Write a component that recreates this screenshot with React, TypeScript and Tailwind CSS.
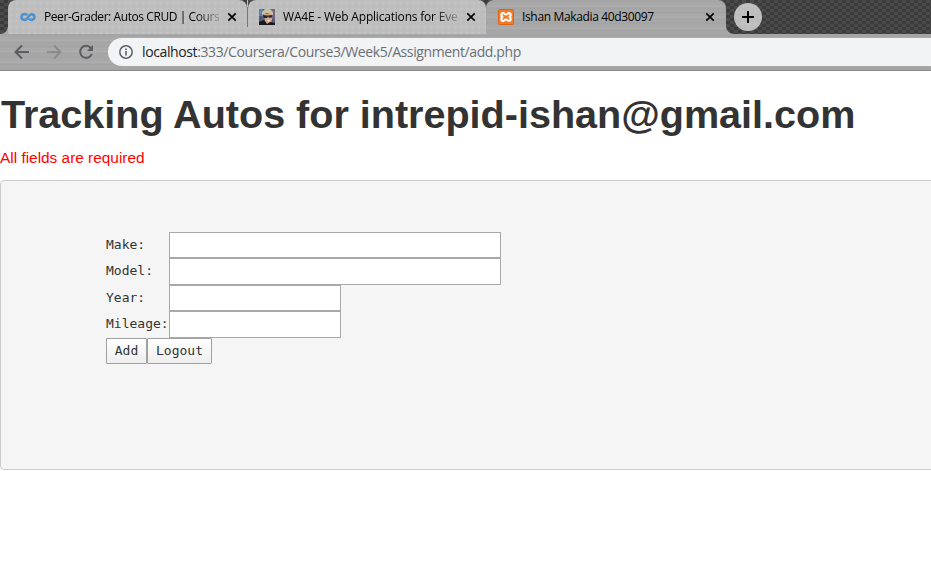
import React from "react";

const METAL =
  "bg-[#a6a6a6] bg-[repeating-linear-gradient(180deg,#a3a3a3_0px,#a9a9a9_1px,#9f9f9f_2px,#acacac_3px,#a5a5a5_5px,#b0b0b0_6px,#a4a4a4_8px,#a8a8a8_11px)]";
const DOTS =
  "bg-[#bebebe] bg-[radial-gradient(circle,#c5c5c5_0.6px,transparent_1px),radial-gradient(circle,#b9b9b9_0.6px,transparent_1px)] bg-[size:6px_6px] bg-[position:0_0,3px_3px]";
const CARBON =
  "bg-[#444] bg-[repeating-conic-gradient(#3b3b3b_0deg_90deg,#4b4b4b_90deg_180deg)] bg-[size:8px_6px]";

const Close = () => (
  <svg width="10" height="10" viewBox="0 0 10 10" className="shrink-0">
    <path d="M1.3 1.3l7.4 7.4M8.7 1.3l-7.4 7.4" stroke="#000" strokeWidth="1.7" />
  </svg>
);

const CourseraIcon = () => (
  <svg width="16" height="16" viewBox="0 0 16 16" className="shrink-0">
    <path d="M7.2 6.2C5.2 3.8 1.5 5 1.5 8s4 4.1 5.9 1.3l1.8-2.7c1.6-2.3 5.3-1.3 5.3 1.4s-3.7 3.9-5.5 1.7" fill="none" stroke="#4a90d2" strokeWidth="2.5" />
  </svg>
);

const PortraitIcon = () => (
  <svg width="16" height="16" viewBox="0 0 16 16" className="shrink-0">
    <path d="M0 0h16v16H0z" fill="#525d75" />
    <path d="M0 0h4v7H0z" fill="#5a84b8" />
    <path d="M12 0h4v10h-4z" fill="#746480" />
    <path d="M5 5h8v6l-2 4H8l-2-3z" fill="#d6a58d" />
    <path d="M3 6V3l3-3h5l3 3v3L8 4z" fill="#c9c0a0" />
    <path d="M4 6l5 .5L13 6v2.5l-3 .3L9 7.5 8 9H5z" fill="#292831" />
    <path d="M0 16v-3l5-2 3 4 3-2 5 1v2z" fill="#17191d" />
    <path d="M8 11h3l-1 2z" fill="#eee2d4" />
  </svg>
);

const XamppIcon = () => (
  <svg width="16" height="16" viewBox="0 0 16 16" className="shrink-0">
    <rect x="0.5" y="0.5" width="15" height="15" rx="1" fill="#f47b2a" stroke="#d96518" />
    <path d="M5.2 8C2.7 7.7 2.8 4 5 4c1.3 0 1.5 1.5 3 1.5S9.7 4 11 4c2.2 0 2.3 3.7-.2 4 2.5.3 2.4 4 .2 4-1.3 0-1.5-1.5-3-1.5S6.3 12 5 12c-2.2 0-2.3-3.7.2-4z" fill="none" stroke="#fff" strokeWidth="2.2" />
  </svg>
);

function Field({ label, wide, raised }: { label: string; wide?: boolean; raised?: boolean }) {
  return (
    <label className="flex h-[26.4px] items-center">
      <span className={"w-[63px] shrink-0 whitespace-pre " + (raised ? "pb-[2px]" : "")}>{label}</span>
      <input className={"h-full border border-[#a9a9a9] bg-white outline-none " + (wide ? "w-[332px]" : "w-[172px]")} />
    </label>
  );
}

export default function App() {
  return (
    <div className="h-[586px] w-[931px] overflow-hidden bg-white font-['Liberation_Sans',sans-serif] text-[#333]">
      <header className="font-['Open_Sans',sans-serif]">
        <div className={"flex h-[34px] " + METAL}>
          <div className={"w-2 rounded-br-lg " + CARBON} />
          <div className={"flex w-[718px] " + CARBON}>
            <div className={"flex w-[239px] items-center rounded-t-lg pl-3 " + DOTS}>
              <CourseraIcon />
              <div className="ml-2 w-[175px] whitespace-nowrap text-[12px] tracking-[-0.42px] text-black [mask-image:linear-gradient(90deg,#000_86%,#0003)]">Peer-Grader: Autos CRUD | Cours</div>
              <div className="ml-2"><Close /></div>
            </div>
            <div className="flex w-px items-center bg-[#bebebe]"><div className="h-5 w-px bg-[#777]" /></div>
            <div className={"flex w-[238px] items-center rounded-t-lg pl-[11px] " + DOTS}>
              <PortraitIcon />
              <div className="ml-2 w-[175px] whitespace-nowrap text-[12px] tracking-[-0.2px] text-black [mask-image:linear-gradient(90deg,#000_86%,#0003)]">WA4E - Web Applications for Eve</div>
              <div className="ml-2"><Close /></div>
            </div>
            <div className={"flex w-[240px] items-center rounded-t-lg pl-3 " + METAL}>
              <XamppIcon />
              <div className="ml-2 w-[175px] whitespace-nowrap text-[12px] tracking-[-0.35px] text-black">Ishan Makadia 40d30097</div>
              <div className="ml-2"><Close /></div>
            </div>
          </div>
          <div className={"flex flex-1 rounded-bl-lg pl-2 pt-[3px] " + CARBON}>
            <div className={"flex h-7 w-7 items-center justify-center rounded-full " + DOTS}>
              <svg width="12" height="12" viewBox="0 0 12 12"><path d="M6 0v12M0 6h12" stroke="#000" strokeWidth="2" /></svg>
            </div>
          </div>
        </div>
        <div className={"flex h-[37px] border-b border-[#888] pt-1 " + METAL}>
          <div className="flex h-7 w-[108px] items-center pl-[14px]">
            <svg width="16" height="16" viewBox="0 0 16 16" fill="none" stroke="#5b5d60" strokeWidth="2"><path d="M15 8H2M8 1.5L1.5 8 8 14.5" /></svg>
            <svg className="ml-4" width="16" height="16" viewBox="0 0 16 16" fill="none" stroke="#8b8b8c" strokeWidth="2"><path d="M1 8h13M8 1.5L14.5 8 8 14.5" /></svg>
            <svg className="ml-4" width="16" height="16" viewBox="0 0 16 16"><path d="M12.8 4A6 6 0 1 0 13.8 10" fill="none" stroke="#5b5d60" strokeWidth="2" /><path d="M15 1v6H9z" fill="#5b5d60" /></svg>
          </div>
          <div className="flex h-7 flex-1 items-center rounded-l-full bg-[#f1f3f4] pl-[11px]">
            <svg width="14" height="14" viewBox="0 0 14 14"><circle cx="7" cy="7" r="6.2" fill="none" stroke="#5f6368" strokeWidth="1.5" /><path d="M7 6v4.5M7 3.4v1.6" stroke="#5f6368" strokeWidth="1.6" /></svg>
            <div className="ml-[9px] whitespace-nowrap pb-px text-[14px] tracking-[-0.39px] text-[#6b6f74]"><span className="text-[#202124]">localhost</span>:333/Coursera/Course3/Week5/Assignment/add.php</div>
          </div>
        </div>
      </header>
      <main>
        <h1 className="mt-[21px] h-[44px] whitespace-nowrap pl-px text-[39.6px] font-bold leading-[44px] tracking-[-0.02px]">Tracking Autos for intrepid-ishan@gmail.com</h1>
        <p className="mt-[11px] h-[22px] text-[15.4px] leading-[22px] text-[#f00]">All fields are required</p>
        <form className="mt-[11px] h-[290px] w-[940px] rounded-[4px] border border-[#ccc] bg-[#f5f5f5] pl-[105px] pt-[51px] font-['DejaVu_Sans_Mono',monospace] text-[13px]">
          <Field label="Make:" wide />
          <Field label="Model:" wide raised />
          <Field label="Year:" />
          <Field label="Mileage:" raised />
          <div className="flex h-[26px]">
            <button type="button" className="w-[41px] rounded-[1px] border border-[#a0a0a0] bg-linear-to-b from-white to-[#eee]">Add</button>
            <button type="button" className="w-[65px] rounded-[1px] border border-[#a0a0a0] bg-linear-to-b from-white to-[#eee]">Logout</button>
          </div>
        </form>
      </main>
    </div>
  );
}
